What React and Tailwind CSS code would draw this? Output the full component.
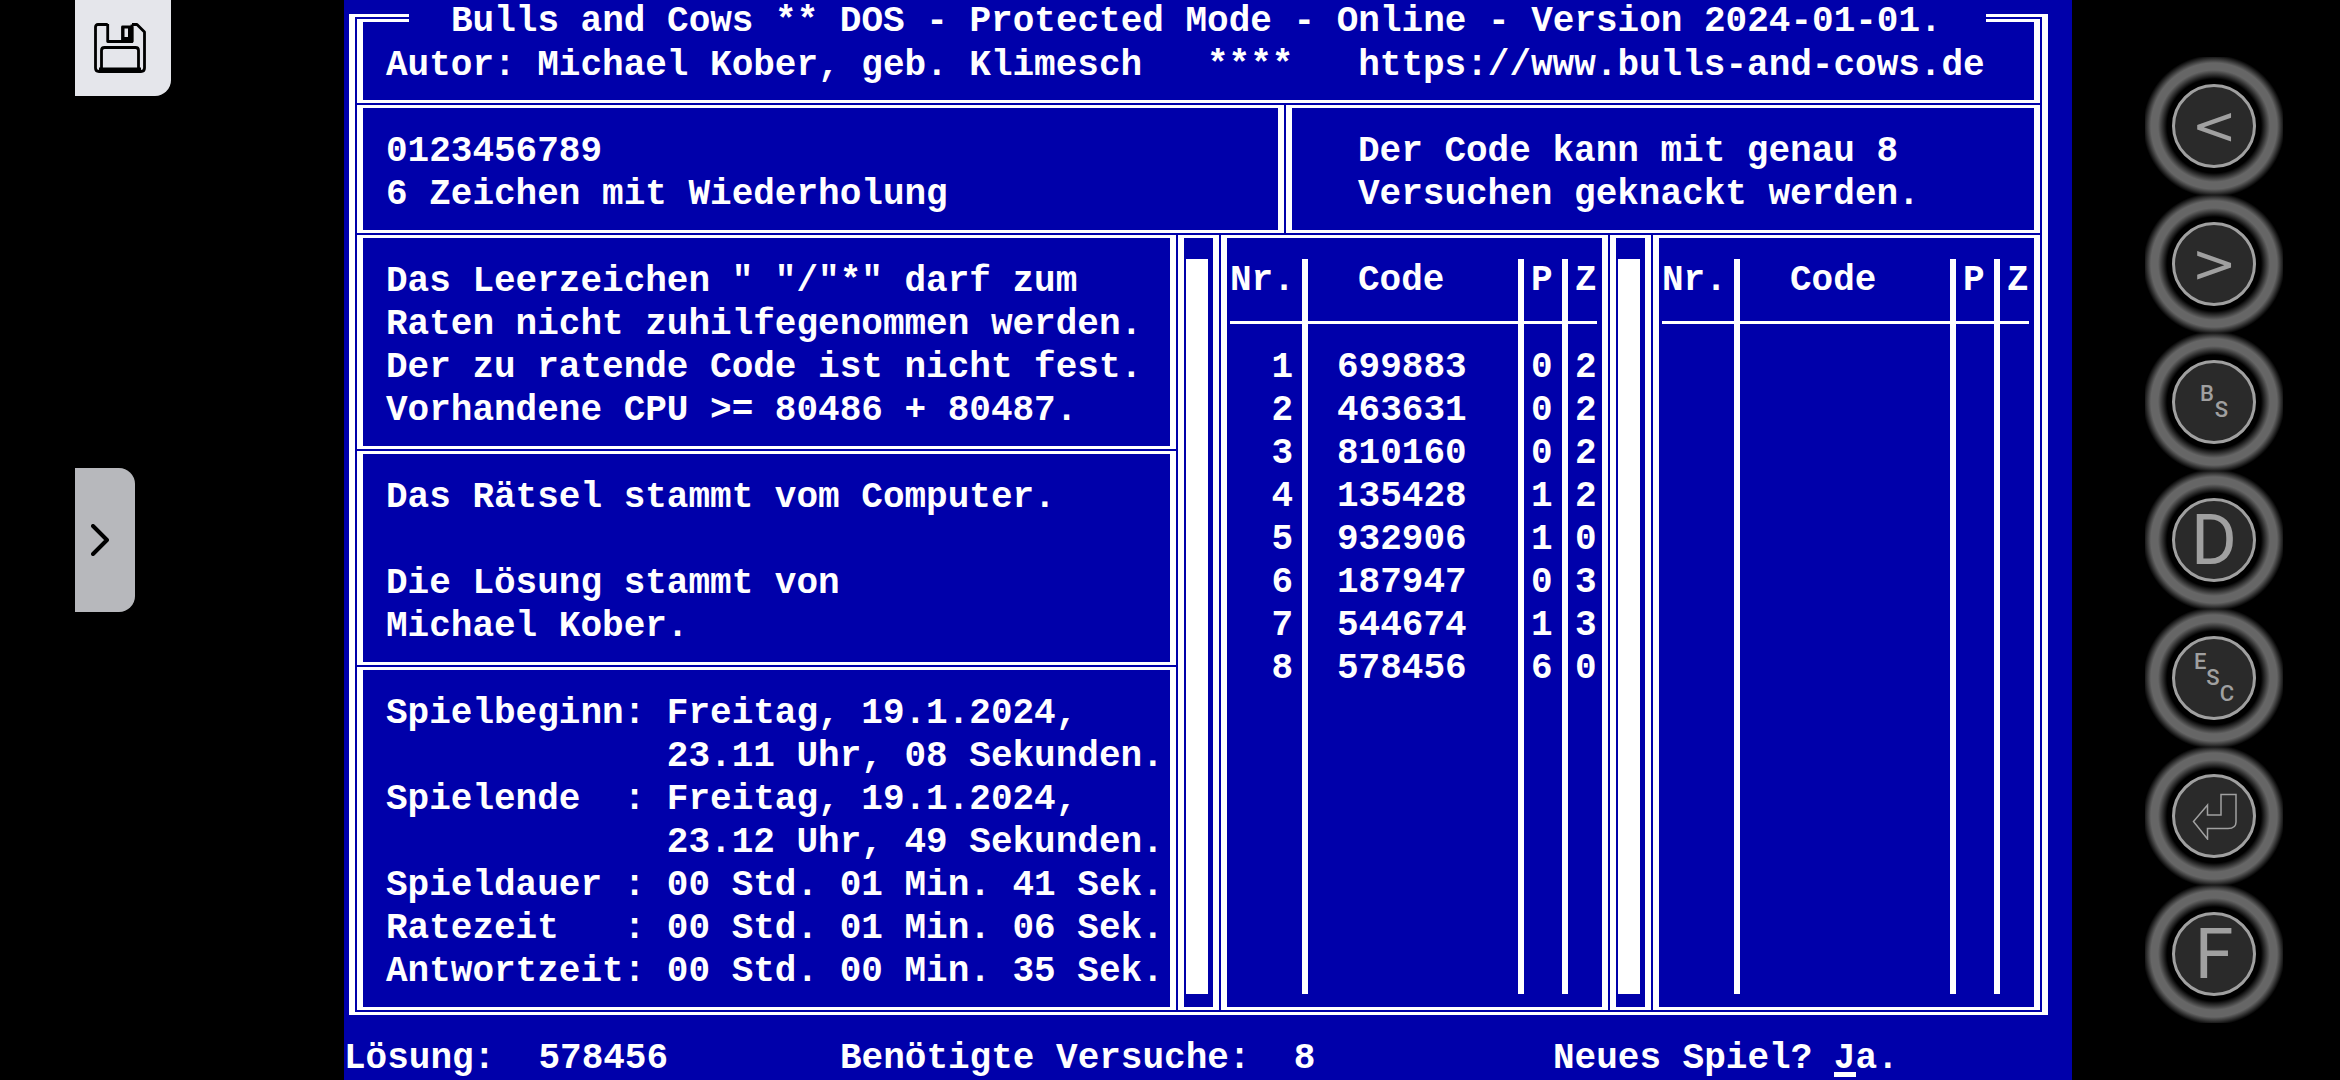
import { useState } from "react";
import clsx from "clsx";

const HINTS = [
  'Das Leerzeichen " "/"*" darf zum',
  "Raten nicht zuhilfegenommen werden.",
  "Der zu ratende Code ist nicht fest.",
  "Vorhandene CPU >= 80486 + 80487.",
];

const ORIGIN = [
  "Das Rätsel stammt vom Computer.",
  "",
  "Die Lösung stammt von",
  "Michael Kober.",
];

const TIMES = [
  "Spielbeginn: Freitag, 19.1.2024,",
  "             23.11 Uhr, 08 Sekunden.",
  "Spielende  : Freitag, 19.1.2024,",
  "             23.12 Uhr, 49 Sekunden.",
  "Spieldauer : 00 Std. 01 Min. 41 Sek.",
  "Ratezeit   : 00 Std. 01 Min. 06 Sek.",
  "Antwortzeit: 00 Std. 00 Min. 35 Sek.",
];

const GUESSES = [
  { code: "699883", p: 0, z: 2 },
  { code: "463631", p: 0, z: 2 },
  { code: "810160", p: 0, z: 2 },
  { code: "135428", p: 1, z: 2 },
  { code: "932906", p: 1, z: 0 },
  { code: "187947", p: 0, z: 3 },
  { code: "544674", p: 1, z: 3 },
  { code: "578456", p: 6, z: 0 },
];

function Panel({ className, children }) {
  return (
    <section
      className={clsx(
        "border-x-[6px] border-y-[3px] border-white",
        className
      )}
    >
      {children}
    </section>
  );
}

function Lines({ lines, className }) {
  return (
    <div className={clsx("whitespace-pre pt-[22px]", className)}>
      {lines.map((line, i) => (
        <p key={i} className="h-[43px]">
          {line}
        </p>
      ))}
    </div>
  );
}

function Bar() {
  return (
    <Panel className="flex pt-[21px] pb-[13px] pl-[2px]">
      <div className="w-[22px] bg-white" />
    </Panel>
  );
}

function GuessTable({ guesses }) {
  return (
    <Panel className="flex pt-[21px] pr-[5px] pb-[13px] pl-[3px]">
      <table className="w-full table-fixed border-separate border-spacing-0 text-left">
        <colgroup>
          <col className="w-[78px]" />
          <col />
          <col className="w-[44px]" />
          <col className="w-[29px]" />
        </colgroup>
        <thead>
          <tr className="h-[65px] align-top *:border-b-[3px] *:border-white *:p-0 *:font-bold">
            <th className="border-r-[6px]">Nr.</th>
            <th className="border-r-[6px]">
              <span className="pl-[50px]">Code</span>
            </th>
            <th className="border-r-[6px]">
              <span className="pl-[7px]">P</span>
            </th>
            <th>
              <span className="pl-[7px]">Z</span>
            </th>
          </tr>
        </thead>
        <tbody>
          <tr className="h-[22px] *:border-white *:p-0">
            <td className="border-r-[6px]" />
            <td className="border-r-[6px]" />
            <td className="border-r-[6px]" />
            <td />
          </tr>
          {guesses.map((guess, i) => (
            <tr key={guess.code} className="h-[43px] *:border-white *:p-0">
              <td className="border-r-[6px] text-right">
                <span className="pr-[9px]">{i + 1}</span>
              </td>
              <td className="border-r-[6px]">
                <span className="pl-[29px]">{guess.code}</span>
              </td>
              <td className="border-r-[6px]">
                <span className="pl-[7px]">{guess.p}</span>
              </td>
              <td>
                <span className="pl-[7px]">{guess.z}</span>
              </td>
            </tr>
          ))}
          <tr className="*:border-white *:p-0">
            <td className="border-r-[6px]" />
            <td className="border-r-[6px]" />
            <td className="border-r-[6px]" />
            <td />
          </tr>
        </tbody>
      </table>
    </Panel>
  );
}

function PadButton({ label, children }) {
  return (
    <button
      type="button"
      aria-label={label}
      className="flex size-[138px] items-center justify-center bg-[radial-gradient(circle,#000_47px,#666_56px,#666_63px,#000_71px)]"
    >
      <span className="flex size-[84px] items-center justify-center rounded-full border-[3px] border-[#a0a0a0] bg-[#2a2a2a]">
        {children}
      </span>
    </button>
  );
}

function FloppyIcon() {
  return (
    <svg viewBox="0 0 52 50" className="h-[50px] w-[52px]" fill="none" stroke="#000" strokeWidth="2.8" strokeLinejoin="round">
      <path d="M13.700 1.500H4Q1.500 1.500 1.500 4V45Q1.500 48.500 5 48.500H47Q50.500 48.500 50.500 45V9L43 1.500H38" />
      <path d="M13.700 1V18.500H38V1.500" />
      <path d="M28.500 4H38V18.500H28.500Z" fill="#000" />
      <path d="M30.500 5.500H34V14H30.500Z" fill="#e5e6eb" stroke="none" />
      <path d="M7.500 47V27.500Q7.500 24.500 10.500 24.500H41.500Q44.500 24.500 44.500 27.500V47" />
      <path d="M5 47H47" strokeWidth="5" />
    </svg>
  );
}

function EnterIcon() {
  return (
    <svg viewBox="-24 -24 48 48" className="size-12" fill="none" stroke="#a0a0a0" strokeWidth="1.5">
      <path d="M-20.500 5.500L-6.500 -11V-1H7V-21.500H22V6Q22 12.500 14 12.500H-6.500V23Z" />
    </svg>
  );
}

export default function App() {
  const [answer, setAnswer] = useState("Ja.");

  return (
    <div className="flex h-screen bg-black">
      <aside className="flex w-[344px] shrink-0 flex-col pl-[75px]">
        <button
          type="button"
          aria-label="Speichern"
          className="flex size-24 items-center rounded-br-2xl bg-[#e5e6eb] pl-[19px]"
        >
          <FloppyIcon />
        </button>
        <button
          type="button"
          aria-label="Menü öffnen"
          className="mt-[372px] flex h-36 w-[60px] items-center rounded-r-2xl bg-[#b7b8bc] pl-4"
        >
          <svg viewBox="0 0 18 32" className="h-8 w-[18px]" fill="none" stroke="#000" strokeWidth="4" strokeLinecap="round" strokeLinejoin="round">
            <path d="M2 2L16 16L2 30" />
          </svg>
        </button>
      </aside>

      <main className="flex min-w-0 flex-1 flex-col overflow-hidden bg-[#0000aa] pt-[14px] font-['Liberation_Mono',monospace] text-[36px] leading-[43px] font-bold text-white">
        <div className="relative mr-6 ml-[5px] flex flex-1 flex-col gap-[2px] border-x-[6px] border-y-[3px] border-white p-[2px]">
          <h1 className="absolute -top-[17px] right-14 left-[54px] h-[43px] overflow-hidden bg-[#0000aa] pl-[42px] whitespace-pre">
            Bulls and Cows ** DOS - Protected Mode - Online - Version 2024-01-01.
          </h1>

          <Panel className="h-[84px] pt-[22px] pl-[23px] whitespace-pre">
            {"Autor: Michael Kober, geb. Klimesch   ****   "}
            <a href="https://www.bulls-and-cows.de">https://www.bulls-and-cows.de</a>
          </Panel>

          <div className="grid h-[128px] grid-cols-[1fr_754px] gap-[2px]">
            <Panel>
              <Lines lines={["0123456789", "6 Zeichen mit Wiederholung"]} className="pl-[23px]" />
            </Panel>
            <Panel>
              <Lines lines={["Der Code kann mit genau 8", "Versuchen geknackt werden."]} className="pl-[66px]" />
            </Panel>
          </div>

          <div className="grid flex-1 grid-cols-[1fr_41px_387px_41px_387px] gap-[2px]">
            <div className="flex flex-col gap-[2px]">
              <Panel className="h-[214px]">
                <Lines lines={HINTS} className="pl-[23px]" />
              </Panel>
              <Panel className="h-[214px]">
                <Lines lines={ORIGIN} className="pl-[23px]" />
              </Panel>
              <Panel className="flex-1">
                <Lines lines={TIMES} className="pl-[23px]" />
              </Panel>
            </div>
            <Bar />
            <GuessTable guesses={GUESSES} />
            <Bar />
            <GuessTable guesses={[]} />
          </div>
        </div>

        <footer className="mt-[22px] flex h-[43px] whitespace-pre">
          <p className="w-[496px]">{"Lösung:  578456"}</p>
          <p className="w-[713px]">{"Benötigte Versuche:  8"}</p>
          <label htmlFor="again">{"Neues Spiel? "}</label>
          <div className="relative">
            <input
              id="again"
              value={answer}
              onChange={(e) => setAnswer(e.target.value)}
              className="h-[43px] w-32 bg-transparent outline-none"
            />
            <span className="absolute bottom-[3px] left-0 h-[5px] w-[22px] bg-white" />
          </div>
        </footer>
      </main>

      <nav className="flex w-[268px] shrink-0 flex-col items-center pt-[57px] pl-4 font-[Roboto,sans-serif] text-[70px] leading-[70px] text-[#a0a0a0]">
        <PadButton label="Links">
          <span className="font-['DejaVu_Sans',sans-serif] text-[54px]">&lt;</span>
        </PadButton>
        <PadButton label="Rechts">
          <span className="font-['DejaVu_Sans',sans-serif] text-[54px]">&gt;</span>
        </PadButton>
        <PadButton label="Backspace">
          <span className="flex gap-px text-[22px] leading-4 font-medium">
            <span>B</span>
            <span className="pt-4">S</span>
          </span>
        </PadButton>
        <PadButton label="D">D</PadButton>
        <PadButton label="Escape">
          <span className="flex text-[22px] leading-4 font-medium">
            <span>E</span>
            <span className="pt-4">S</span>
            <span className="pt-8">C</span>
          </span>
        </PadButton>
        <PadButton label="Enter">
          <EnterIcon />
        </PadButton>
        <PadButton label="F">F</PadButton>
      </nav>
    </div>
  );
}
